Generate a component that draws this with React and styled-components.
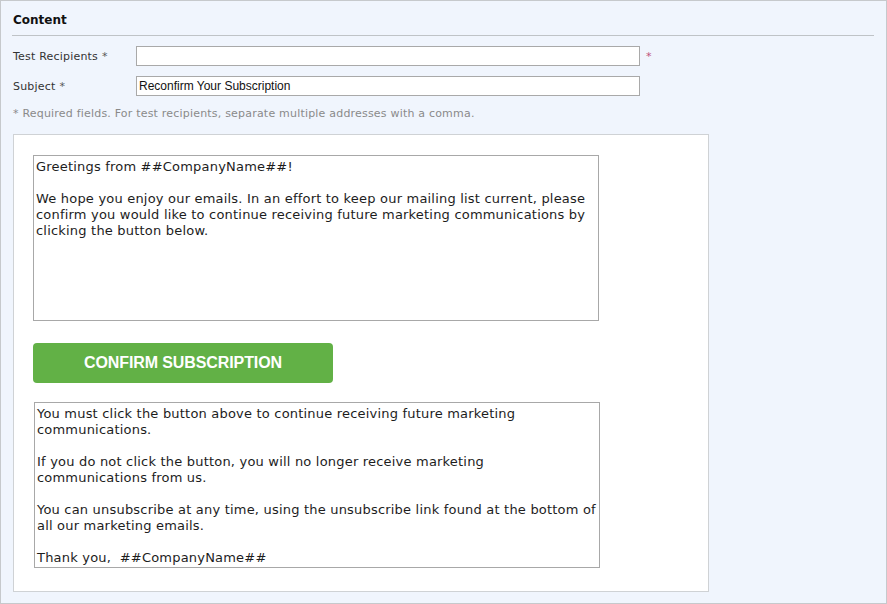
import React from "react";
import styled, { createGlobalStyle } from "styled-components";

const GlobalStyle = createGlobalStyle`
  html, body {
    margin: 0;
    padding: 0;
    background: #ffffff;
  }
  * {
    box-sizing: border-box;
  }
`;

const Panel = styled.div`
  width: 887px;
  height: 604px;
  border: 1px solid #c6c9cc;
  background: #f0f5fd;
  padding: 10px 11px 0 11px;
  font-family: Tahoma, "DejaVu Sans", sans-serif;
  color: #222;
`;

const Heading = styled.h2`
  margin: 0;
  font-size: 12px;
  font-weight: bold;
  color: #111;
  padding: 2px 0 8px 1px;
  border-bottom: 1px solid #bfc3c7;
  margin-right: 1px;
`;

const Form = styled.div`
  display: flex;
  flex-direction: column;
  gap: 10px;
  padding-top: 10px;
`;

const Row = styled.div`
  display: flex;
  align-items: center;
  height: 20px;
`;

const Label = styled.label`
  width: 124px;
  padding-left: 1px;
  font-size: 11px;
  letter-spacing: 0.2px;
  color: #333;
`;

const Star = styled.span`
  color: ${(p) => (p.$red ? "#c0507a" : "#555")};
  margin-left: ${(p) => (p.$red ? 6 : 4)}px;
  font-size: 11px;
`;

const Input = styled.input`
  width: 504px;
  height: 20px;
  border: 1px solid #a9a9a9;
  background: #fff;
  padding: 1px 2px;
  font-family: "Liberation Sans", Arial, sans-serif;
  font-size: 12px;
  color: #111;
  outline: none;
`;

const Note = styled.div`
  font-size: 11px;
  letter-spacing: 0.2px;
  color: #8a8a8a;
  padding-left: 1px;
  margin-top: 11px;
`;

const Canvas = styled.div`
  width: 696px;
  height: 458px;
  margin: 14px 0 0 1px;
  background: #fff;
  border: 1px solid #cfd2d5;
  padding: 20px 0 0 19px;
  display: flex;
  flex-direction: column;
  align-items: flex-start;
`;

const TextBlock = styled.div`
  width: 566px;
  height: 166px;
  border: 1px solid #a8a8a8;
  padding: 3px 2px 2px 2px;
  margin-left: ${(p) => p.$shift || 0}px;
  font-family: Tahoma, "DejaVu Sans", sans-serif;
  font-size: 13px;
  letter-spacing: 0.2px;
  line-height: 16px;
  color: #1d1d1d;
  background: #fff;

  p {
    margin: 0 0 16px 0;
  }
  p:last-child {
    margin-bottom: 0;
  }
`;

const ConfirmButton = styled.button`
  width: 300px;
  height: 40px;
  margin: 22px 0 19px 0;
  border: none;
  border-radius: 4px;
  background: #62b146;
  color: #fff;
  font-family: "Liberation Sans", Arial, sans-serif;
  font-weight: bold;
  font-size: 16px;
  letter-spacing: -0.1px;
  cursor: pointer;
`;

export default function App() {
  return (
    <>
      <GlobalStyle />
      <Panel>
        <Heading>Content</Heading>
        <Form>
          <Row>
            <Label>
              Test Recipients<Star>*</Star>
            </Label>
            <Input defaultValue="" />
            <Star $red>*</Star>
          </Row>
          <Row>
            <Label>
              Subject<Star>*</Star>
            </Label>
            <Input defaultValue="Reconfirm Your Subscription" />
          </Row>
        </Form>
        <Note>* Required fields. For test recipients, separate multiple addresses with a comma.</Note>
        <Canvas>
          <TextBlock>
            <p>Greetings from ##CompanyName##!</p>
            <p>
              We hope you enjoy our emails. In an effort to keep our mailing list current, please
              confirm you would like to continue receiving future marketing communications by
              clicking the button below.
            </p>
          </TextBlock>
          <ConfirmButton>CONFIRM SUBSCRIPTION</ConfirmButton>
          <TextBlock $shift={1}>
            <p>You must click the button above to continue receiving future marketing communications.</p>
            <p>If you do not click the button, you will no longer receive marketing communications from us.</p>
            <p>
              You can unsubscribe at any time, using the unsubscribe link found at the bottom of all
              our marketing emails.
            </p>
            <p>Thank you,&nbsp; ##CompanyName##</p>
          </TextBlock>
        </Canvas>
      </Panel>
    </>
  );
}
